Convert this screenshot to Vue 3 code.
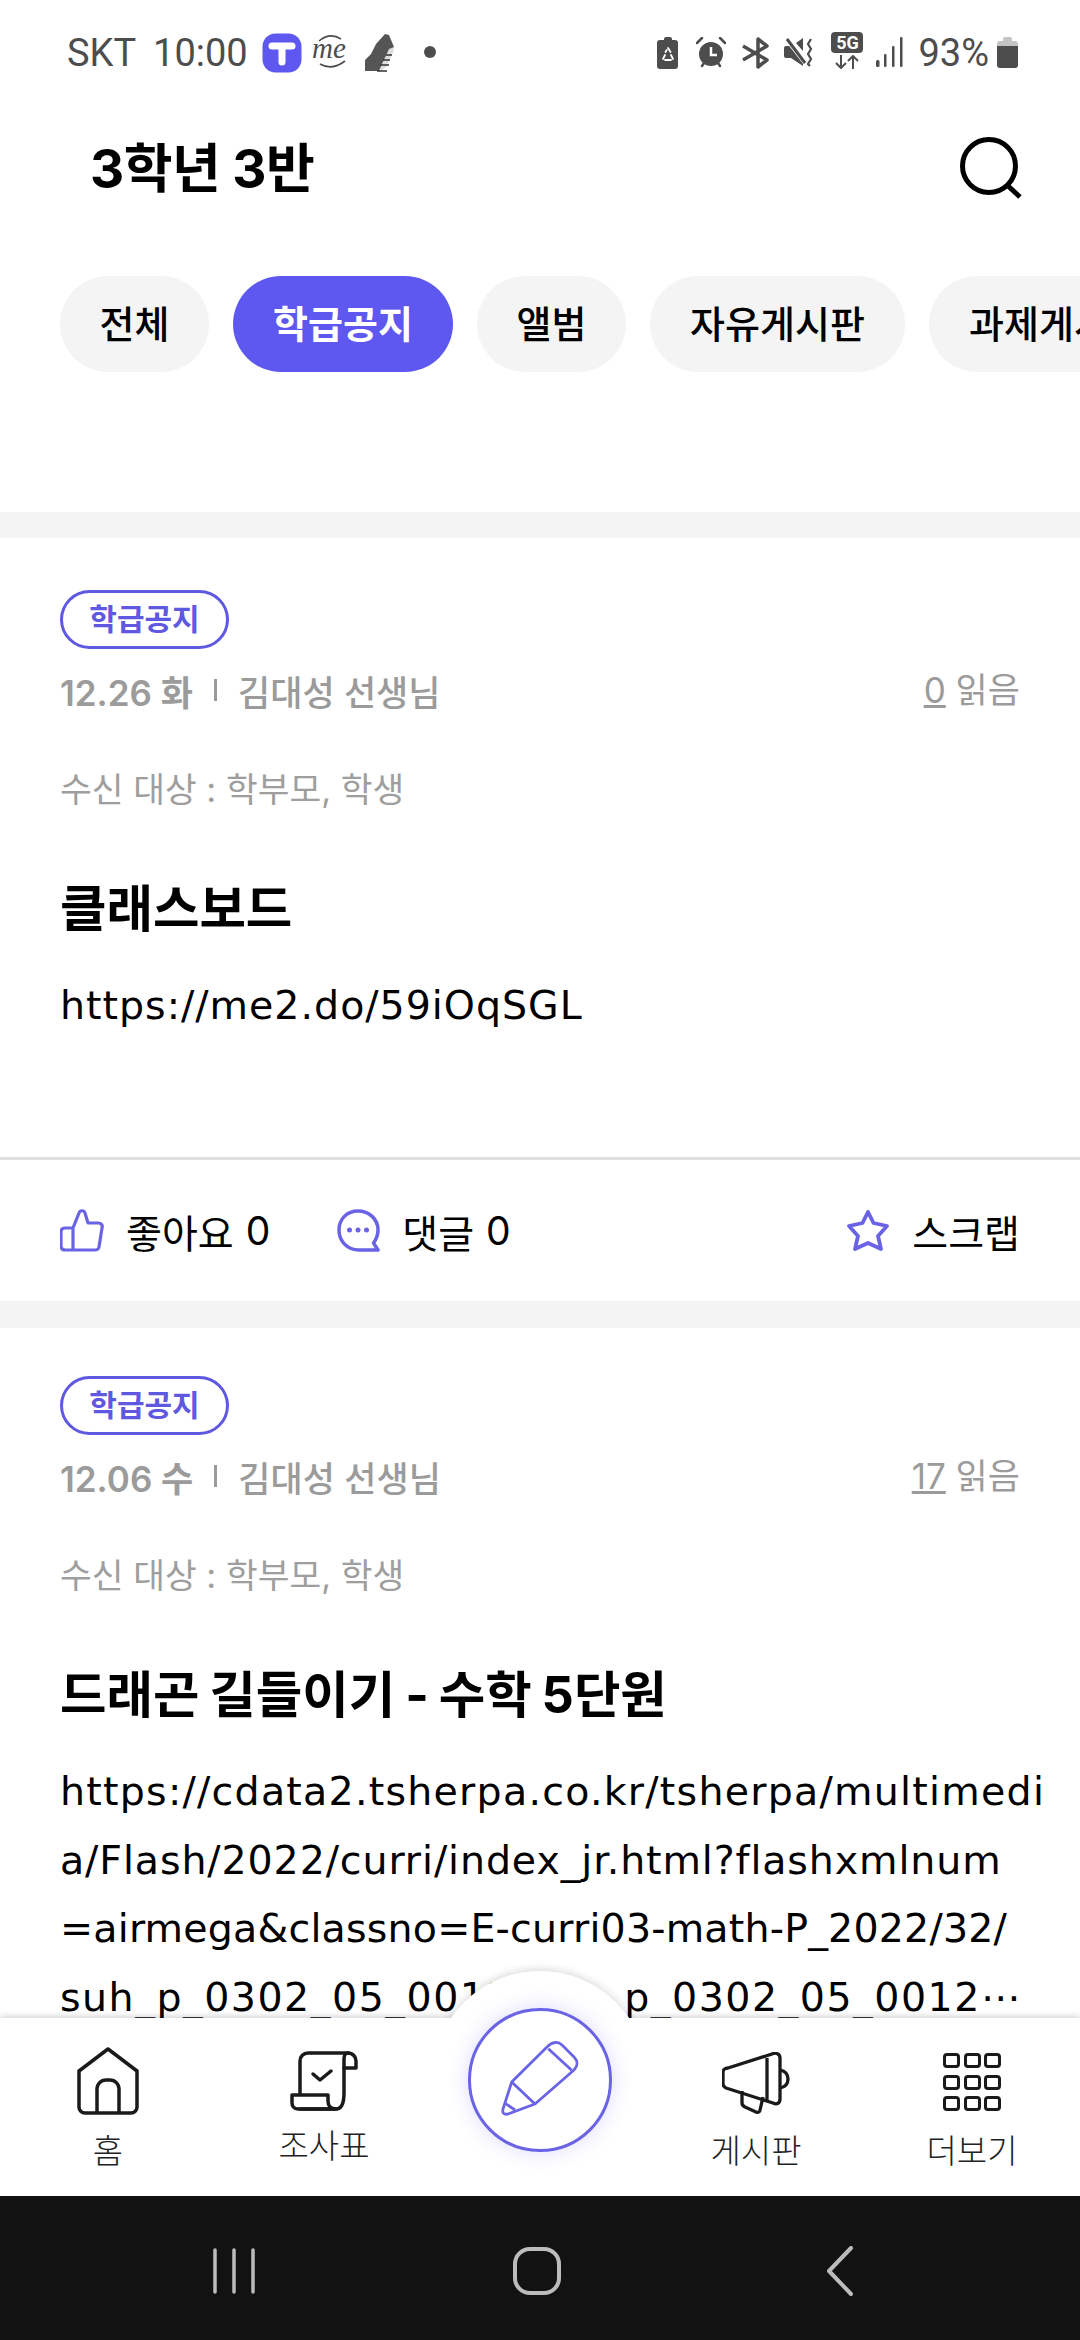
<script setup>
const tabs = [
  { label: '전체', w: 149 },
  { label: '학급공지', w: 220, active: true },
  { label: '앨범', w: 149 },
  { label: '자유게시판', w: 255 },
  { label: '과제게시판', w: 255 }
]

const posts = [
  {
    date: '12.26 화',
    reads: '0',
    title: '클래스보드',
    body: 'https://me2.do/59iOqSGL'
  },
  {
    date: '12.06 수',
    reads: '17',
    title: '드래곤 길들이기 - 수학 5단원',
    lines: [
      { text: 'https://cdata2.tsherpa.co.kr/tsherpa/multimedi', ls: 1.25 },
      { text: 'a/Flash/2022/curri/index_jr.html?flashxmlnum', ls: 0.9 },
      { text: '=airmega&classno=E-curri03-math-P_2022/32/', ls: 0.2 },
      { text: 'suh_p_0302_05_0012/suh_p_0302_05_0012', ls: 1.5 }
    ]
  }
]
</script>

<template>
  <div class="screen">
    <div class="status">
      <span class="carrier">SKT</span>
      <span class="clock">10:00</span>
      <svg class="s-t" width="40" height="40" viewBox="0 0 40 40">
        <rect x="0.5" y="0.5" width="39" height="39" rx="13" fill="#5f58f0" />
        <path d="M10 13h20M20 13v16" stroke="#fff" stroke-width="7" stroke-linecap="round" fill="none" />
      </svg>
      <svg class="s-me" width="38" height="38" viewBox="0 0 38 38" fill="none" stroke="#4d4d4d">
        <path d="M7 8Q18 -1 29 6" stroke-width="1.6" />
        <path d="M8 31Q20 38 33 28" stroke-width="1.6" />
        <text x="0" y="25" class="s-me-text">me</text>
      </svg>
      <svg class="s-shoe" width="32" height="40" viewBox="0 0 32 40">
        <path d="M2 38V27l6-6 5-10 9-10 4 1 5 12-15 24z" fill="#555" />
        <path d="M16 38l3-7 7-15 5-2-1 6-7 14-5 4z" fill="#ddd" />
        <path d="M14 38h10M17 32h9M20 27h7M23 22h6" stroke="#333" stroke-width="1.5" />
      </svg>
      <span class="s-dot"></span>

      <div class="status-right">
        <svg width="22" height="32" viewBox="0 0 22 32">
          <path d="M7 2a2 2 0 0 1 2-2h4a2 2 0 0 1 2 2v1h3a3 3 0 0 1 3 3v23a3 3 0 0 1-3 3H3a3 3 0 0 1-3-3V6a3 3 0 0 1 3-3h4z" fill="#4d4d4d" />
          <path d="M11 11l2.500 4M8.500 15l1.200-2M6 22l2-4M8 23h6M16 22l-2-4" stroke="#fff" stroke-width="1.800" fill="none" stroke-linecap="round" />
        </svg>
        <svg class="s-alarm" width="30" height="31" viewBox="0 0 30 31">
          <circle cx="15" cy="17" r="12" fill="#4d4d4d" />
          <path d="M15 10v8h6" stroke="#fff" stroke-width="2.500" fill="none" />
          <path d="M1 6l5-5M29 6l-5-5M6 29l2-3M24 29l-2-3" stroke="#4d4d4d" stroke-width="2.500" stroke-linecap="round" />
        </svg>
        <svg class="s-bt" width="28" height="32" viewBox="0 0 28 32" fill="none" stroke="#4d4d4d" stroke-width="3.500" stroke-linejoin="round">
          <path d="M2 9l24 14-9 7V2l9 7L2 23" />
        </svg>
        <svg class="s-mute" width="30" height="30" viewBox="0 0 30 30">
          <path d="M0 11a2 2 0 0 1 2-2h5l12 12v8L7 21H2a2 2 0 0 1-2-2zM12 6l7-5v13z" fill="#4d4d4d" />
          <path d="M3 2l20 26" stroke="#fff" stroke-width="5" />
          <path d="M3 2l18 24" stroke="#4d4d4d" stroke-width="3" />
          <path d="M27 2l-3 5 3 5-3 5 3 5-3 5 2 2" stroke="#4d4d4d" stroke-width="2.200" fill="none" />
        </svg>
        <div class="s-5g">
          <span class="s-5g-box">5G</span>
          <svg width="26" height="14" viewBox="0 0 26 14" fill="none" stroke="#4d4d4d" stroke-width="2">
            <path d="M7 0v13M2 8l5 5 5-5M19 14V1M14 6l5-5 5 5" />
          </svg>
        </div>
        <svg class="s-signal" width="27" height="30" viewBox="0 0 27 30" fill="#4d4d4d">
          <rect x="0" y="23" width="3.500" height="7" rx="1.500" />
          <rect x="8" y="17" width="2.500" height="13" rx="1" />
          <rect x="16" y="9" width="2.500" height="21" rx="1" />
          <rect x="24" y="0" width="2.500" height="30" rx="1" />
        </svg>
        <span class="pct">93%</span>
        <svg class="s-batt" width="21" height="31" viewBox="0 0 21 31">
          <path d="M6 2a2 2 0 0 1 2-2h5a2 2 0 0 1 2 2v2h3a3 3 0 0 1 3 3v3H0V7a3 3 0 0 1 3-3h3z" fill="#c4c4c4" />
          <path d="M0 9h21v19a3 3 0 0 1-3 3H3a3 3 0 0 1-3-3z" fill="#4d4d4d" />
        </svg>
      </div>
    </div>

    <header class="top">
      <h1>3학년 3반</h1>
      <svg width="62" height="62" viewBox="0 0 62 62" fill="none" stroke="#000" stroke-width="5">
        <circle cx="29" cy="29" r="26.500" />
        <path d="M47 48l13 12" />
      </svg>
    </header>

    <div class="tabs">
      <span
        v-for="tab in tabs"
        :key="tab.label"
        class="tab"
        :class="{ active: tab.active }"
        :style="{ width: tab.w + 'px' }"
      >{{ tab.label }}</span>
    </div>

    <div class="feed">
      <article v-for="post in posts" :key="post.date" class="post">
        <div class="post-main">
          <span class="badge">학급공지</span>
          <div class="meta">
            <span class="date">{{ post.date }}</span>
            <i class="sep"></i>
            <span>김대성 선생님</span>
            <span class="reads"><u>{{ post.reads }}</u> 읽음</span>
          </div>
          <p class="target">수신 대상 : 학부모, 학생</p>
          <h2>{{ post.title }}</h2>
          <p v-if="post.body" class="body">{{ post.body }}</p>
          <p v-else class="body">
            <span
              v-for="(line, i) in post.lines"
              :key="line.text"
              class="line"
              :style="{ letterSpacing: line.ls + 'px' }"
            >{{ line.text }}<span v-if="i === 3" class="ell">…</span></span>
          </p>
        </div>
        <div v-if="post.body" class="actions">
          <span class="act">
            <svg width="44" height="43" viewBox="0 0 44 43" fill="none" stroke="#6a63e6" stroke-width="3.200" stroke-linejoin="round">
              <path d="M13 19L19 4c1-3 5-3 6 0l3 10h10c3 0 5 2 4 5l-3 19c-1 3-2 3-4 3H5c-2 0-4-1-4-4V23c0-3 2-4 4-4h8V41" />
            </svg>
            좋아요 <b>0</b>
          </span>
          <span class="act act-reply">
            <svg width="43" height="43" viewBox="0 0 43 43" fill="none" stroke="#6a63e6" stroke-width="3.500">
              <path d="M41 41H22C10 41 2 32 2 21S10 2 21 2s20 8 20 19c0 5-1.500 9-4.500 13z" stroke-linejoin="round" />
              <g fill="#6a63e6" stroke="none"><circle cx="12.500" cy="21" r="2.500" /><circle cx="21" cy="21" r="2.500" /><circle cx="29.500" cy="21" r="2.500" /></g>
            </svg>
            댓글 <b>0</b>
          </span>
          <span class="act act-scrap">
            <svg width="46" height="43" viewBox="0 0 46 43" fill="none" stroke="#6a63e6" stroke-width="3.800" stroke-linejoin="round">
              <path d="M23 3l5.500 11L42 17l-9 10 3 13-13-6-13 6 3-13-9-10 13.500-3z" />
            </svg>
            스크랩
          </span>
        </div>
      </article>
    </div>

    <nav class="bottom">
      <div class="fab-bump"></div>
      <div class="fab">
        <svg width="80" height="80" viewBox="0 0 80 80" fill="none" stroke="#6a63e6" stroke-width="2.800" stroke-linejoin="round">
          <path d="M11.700 45L48 9c4-4 10-5 14-1l12 12c4 4 4 9 0 13L35 67 8 77c-4 1-6-1-5-5z" />
          <path d="M48.300 11.700L71.700 33.300M11.700 45L35 67M5.700 66.700L15 73" />
        </svg>
      </div>
      <div class="nav-item item-home">
        <svg width="62" height="68" viewBox="0 0 62 68" fill="none" stroke="#1a1a1a" stroke-width="3.500" stroke-linejoin="round">
          <path d="M31 2L60 24V60a6 6 0 0 1-6 6H8a6 6 0 0 1-6-6V24z" />
          <path d="M20 66V42a9 9 0 0 1 9-9h4a9 9 0 0 1 9 9v24" />
        </svg>
        <span>홈</span>
      </div>
      <div class="nav-item item-list">
        <svg width="68" height="60" viewBox="0 0 68 60" fill="none" stroke="#1a1a1a" stroke-width="3.500" stroke-linejoin="round" stroke-linecap="round">
          <path d="M10 42V10a8 8 0 0 1 8-8h40" />
          <path d="M58 2c5 0 8 4 8 8v7H54V42c0 10-2 16-8 16H10" />
          <path d="M54 17V8c0-4 2-6 4-6" />
          <path d="M2 44h36v6c0 4 2 8 8 8H8c-4 0-6-3-6-6z" />
          <path d="M23 23l7 6 11-9" />
        </svg>
        <span>조사표</span>
      </div>
      <div class="nav-gap"></div>
      <div class="nav-item item-board">
        <svg width="68" height="64" viewBox="0 0 68 64" fill="none" stroke="#1a1a1a" stroke-width="3.300" stroke-linejoin="round">
          <path d="M6 16L50 2c4-2 8 0 8 4V47c0 4-3 6-7 4L4 36c-2-1-3-2-3-4V20c0-2 2-4 5-4z" />
          <path d="M45 6V48" />
          <path d="M58 18c5 1 8 4 8 9s-3 8-8 9" />
          <path d="M20 39v12c0 2 1 3 3 4l11 5c2 1 4 0 4-2l3-13" />
        </svg>
        <span>게시판</span>
      </div>
      <div class="nav-item item-more">
        <div class="grid-ico"><i v-for="n in 9" :key="n"></i></div>
        <span>더보기</span>
      </div>
    </nav>

    <div class="sysnav">
      <svg width="44" height="46" viewBox="0 0 44 46" stroke="#bcbcbc" stroke-width="3.500" stroke-linecap="round">
        <path d="M3 2v42M22 2v42M41 2v42" />
      </svg>
      <svg width="48" height="48" viewBox="0 0 48 48" fill="none" stroke="#bcbcbc" stroke-width="4">
        <rect x="2" y="2" width="44" height="44" rx="15" />
      </svg>
      <svg width="28" height="50" viewBox="0 0 28 50" fill="none" stroke="#bcbcbc" stroke-width="4" stroke-linecap="round" stroke-linejoin="round">
        <path d="M25 2L3 25l22 23" />
      </svg>
    </div>
  </div>
</template>

<style>
html, body { margin: 0; background: #fff; }
</style>

<style scoped>
.screen {
  position: relative;
  width: 1080px;
  height: 2340px;
  overflow: hidden;
  background: #fff;
  display: flex;
  flex-direction: column;
  font-family: "Inter", "Noto Sans CJK KR", sans-serif;
  color: #000;
}

/* status bar */
.status {
  height: 104px;
  flex: none;
  box-sizing: border-box;
  padding: 33px 62px 0 67px;
  display: flex;
  align-items: flex-start;
  font-family: Roboto, "Noto Sans", sans-serif;
  font-size: 38px;
  line-height: 40px;
  color: #4d4d4d;
}
.clock { margin-left: 17px; }
.s-t { margin-left: 14px; }
.s-me { margin-left: 10px; }
.s-me-text {
  font-family: "Liberation Serif", serif;
  font-style: italic;
  font-size: 29px;
  fill: #4d4d4d;
  stroke: none;
}
.s-shoe { margin-left: 13px; }
.s-dot {
  width: 12px;
  height: 12px;
  border-radius: 50%;
  background: #4d4d4d;
  margin: 13px 0 0 29px;
}
.status-right {
  margin-left: auto;
  display: flex;
  align-items: flex-start;
  padding-top: 4px;
}
.s-alarm { margin-left: 17px; }
.s-bt { margin-left: 15px; }
.s-mute { margin-left: 15px; }
.s-5g { margin-left: 17px; margin-top: -5px; display: flex; flex-direction: column; align-items: center; }
.s-5g-box {
  width: 32px;
  height: 21px;
  border-radius: 4px;
  background: #4d4d4d;
  color: #fff;
  font-size: 18px;
  font-weight: 700;
  line-height: 21px;
  text-align: center;
}
.s-5g svg { margin-top: 2px; }
.s-signal { margin-left: 13px; }
.pct { margin-left: 15px; line-height: 32px; }
.s-batt { margin-left: 8px; }

/* title row */
.top {
  height: 120px;
  flex: none;
  box-sizing: border-box;
  padding: 8px 58px 0 90px;
  display: flex;
  align-items: center;
  justify-content: space-between;
}
.top h1 {
  margin: 0 0 6px;
  font-size: 53px;
  font-weight: 700;
  letter-spacing: -0.5px;
}

/* tabs */
.tabs {
  flex: none;
  display: flex;
  gap: 24px;
  padding: 52px 0 0 60px;
  height: 96px;
  margin-bottom: 140px;
  overflow: hidden;
}
.tab {
  flex: none;
  height: 96px;
  border-radius: 48px;
  background: #f4f4f4;
  font-size: 38px;
  font-weight: 500;
  line-height: 96px;
  text-align: center;
  white-space: nowrap;
}
.tab.active {
  background: #5f58f0;
  color: #fff;
  font-weight: 700;
}

/* feed */
.feed {
  flex: 1;
  min-height: 0;
  overflow: hidden;
  background: #f4f4f4;
  padding-top: 26px;
  display: flex;
  flex-direction: column;
  gap: 27px;
}
.post { background: #fff; flex: none; }
.post-main {
  padding: 52px 60px 0;
  height: 622px;
  box-sizing: border-box;
  border-bottom: 3px solid #e0e0e0;
}
.post:last-child .post-main { border-bottom: 0; height: auto; padding-top: 48px; }
.badge {
  display: block;
  box-sizing: border-box;
  width: 169px;
  height: 59px;
  border: 3px solid #5f58e0;
  border-radius: 30px;
  color: #5f58e0;
  font-size: 30px;
  font-weight: 700;
  line-height: 52px;
  text-align: center;
}
.meta {
  display: flex;
  align-items: center;
  margin-top: 13px;
  height: 56px;
  font-size: 35px;
  font-weight: 500;
  color: #9b9b9b;
}
.date { font-weight: 600; }
.sep {
  width: 3px;
  height: 22px;
  background: #9b9b9b;
  margin: 0 21px;
}
.reads { margin-left: auto; font-weight: 400; margin-top: -6px; }
.target {
  margin: 50px 0 0;
  height: 44px;
  line-height: 44px;
  font-size: 34.500px;
  color: #9e9e9e;
}
h2 {
  margin: 65px 0 0;
  height: 64px;
  line-height: 64px;
  font-size: 50.500px;
  font-weight: 700;
  word-spacing: -2px;
}
.body {
  margin: 30px 0 0;
  font-family: "DejaVu Sans", sans-serif;
  font-size: 39.500px;
  letter-spacing: 1px;
  line-height: 68.500px;
  white-space: nowrap;
}
.line { display: block; height: 68.500px; }
.ell { position: relative; top: -10px; letter-spacing: 0; }

.actions {
  height: 141px;
  box-sizing: border-box;
  padding: 0 60px;
  display: flex;
  align-items: center;
  font-size: 39px;
}
.act { display: flex; align-items: center; gap: 22px; white-space: nowrap; }
.act b { font-weight: 400; margin-left: -10px; }
.act-reply { margin-left: 67px; }
.act-scrap { margin-left: auto; gap: 21px; }

/* bottom nav */
.bottom {
  position: relative;
  flex: none;
  height: 178px;
  background: #fff;
  box-shadow: 0 -2px 6px rgba(0, 0, 0, 0.16);
  display: flex;
  z-index: 1;
}
.fab-bump {
  position: absolute;
  left: 432px;
  top: -47px;
  width: 216px;
  height: 216px;
  border-radius: 50%;
  background: #fff;
  clip-path: inset(-12px -12px 169px -12px);
  box-shadow: 0 -2px 8px rgba(0, 0, 0, 0.14);
}
.fab {
  position: absolute;
  left: 468px;
  top: -10px;
  width: 144px;
  height: 144px;
  box-sizing: border-box;
  border: 3px solid #6a63e6;
  border-radius: 50%;
  background: #fff;
  box-shadow: 0 0 20px rgba(95, 88, 240, 0.22);
  display: flex;
  align-items: center;
  justify-content: center;
}
.fab svg { margin-bottom: 6px; }
.nav-item {
  position: relative;
  width: 216px;
  flex: none;
  display: flex;
  flex-direction: column;
  align-items: center;
  font-size: 33px;
  font-weight: 300;
  color: #222;
  box-sizing: border-box;
}
.nav-item span { line-height: 44px; }
.nav-item svg { display: block; }
.item-home { padding-top: 29px; }
.item-home span { margin-top: 14px; }
.item-list { padding-top: 33px; }
.item-list span { margin-top: 13px; }
.item-board { padding-top: 34px; }
.item-board span { margin-top: 13px; }
.item-more { padding-top: 35px; }
.item-more span { margin-top: 18px; }
.nav-gap { width: 216px; flex: none; }
.grid-ico {
  width: 58px;
  height: 58px;
  display: grid;
  grid-template-columns: repeat(3, 17px);
  grid-template-rows: repeat(3, 15px);
  justify-content: space-between;
  align-content: space-between;
}
.grid-ico i {
  box-sizing: border-box;
  border: 3.500px solid #1a1a1a;
  border-radius: 4px;
}

/* system nav */
.sysnav {
  flex: none;
  height: 144px;
  box-sizing: border-box;
  padding-top: 6px;
  background: #121212;
  display: flex;
  align-items: center;
  position: relative;
}
.sysnav svg { position: absolute; }
.sysnav svg:nth-child(1) { left: 212px; }
.sysnav svg:nth-child(2) { left: 513px; }
.sysnav svg:nth-child(3) { left: 826px; }
</style>
